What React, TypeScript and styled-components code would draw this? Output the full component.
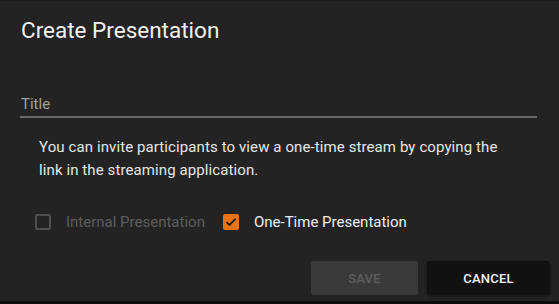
import styled, { createGlobalStyle } from "styled-components";

const GlobalStyle = createGlobalStyle`
  html, body {
    margin: 0;
    padding: 0;
    background: #0c0c0c;
  }
  body {
    font-family: Roboto, "Liberation Sans", sans-serif;
    -webkit-font-smoothing: antialiased;
  }
`;

const Dialog = styled.div`
  width: 559px;
  height: 301px;
  box-sizing: border-box;
  background: #232323;
  border-top: 1px solid #1b1b1b;
  display: flex;
  flex-direction: column;
`;

const Heading = styled.h2`
  margin: 0;
  padding: 15px 21px 0;
  font-size: 22.5px;
  line-height: 28px;
  font-weight: 400;
  color: #f2f2f2;
`;

const Content = styled.div`
  padding: 50px 22px 0 20px;
  display: flex;
  flex-direction: column;
`;

const Field = styled.label`
  display: block;
  border-bottom: 2px solid #6a6a6a;
  padding: 0 1px 2px;
`;

const FieldLabel = styled.span`
  font-size: 15px;
  line-height: 20px;
  color: #a0a0a0;
`;

const Hint = styled.p`
  margin: 18px 19px 0 19px;
  font-size: 15px;
  letter-spacing: 0.1px;
  line-height: 23px;
  color: #e6e6e6;
`;

const Options = styled.div`
  display: flex;
  align-items: center;
  gap: 18px;
  margin: 30px 0 0 15px;
`;

const Option = styled.label<{ $disabled?: boolean }>`
  display: flex;
  align-items: center;
  gap: 15px;
  font-size: 15px;
  line-height: 20px;
  color: ${(p) => (p.$disabled ? "#5d5d5d" : "#efefef")};
`;

const Box = styled.span<{ $checked?: boolean }>`
  width: 16px;
  height: 16px;
  box-sizing: border-box;
  border-radius: 2px;
  display: flex;
  align-items: center;
  justify-content: center;
  background: ${(p) => (p.$checked ? "#e8740f" : "transparent")};
  border: ${(p) => (p.$checked ? "none" : "2px solid #4f4f4f")};
`;

const Actions = styled.div`
  margin-top: auto;
  display: flex;
  justify-content: flex-end;
  gap: 9px;
  padding: 0 9px 6px 0;
`;

const Button = styled.button<{ $primary?: boolean }>`
  height: 34px;
  width: ${(p) => (p.$primary ? "123px" : "107px")};
  border: none;
  border-radius: 3px;
  font-family: inherit;
  font-size: 13px;
  font-weight: 500;
  letter-spacing: 0.2px;
  text-transform: uppercase;
  background: ${(p) => (p.$primary ? "#111111" : "#3a3a3a")};
  color: ${(p) => (p.$primary ? "#f5f5f5" : "#5e5e5e")};
  box-shadow: ${(p) => (p.$primary ? "0 1px 3px rgba(0,0,0,0.5)" : "none")};
`;

const Check = () => (
  <svg width="12" height="10" viewBox="0 0 12 10">
    <path d="M1.5 5.2 L4.5 8 L10.5 1.8" fill="none" stroke="#2a1a0a" strokeWidth="1.8" />
  </svg>
);

export default function App() {
  return (
    <>
      <GlobalStyle />
      <Dialog>
        <Heading>Create Presentation</Heading>
        <Content>
          <Field>
            <FieldLabel>Title</FieldLabel>
          </Field>
          <Hint>
            You can invite participants to view a one-time stream by copying the link in the
            streaming application.
          </Hint>
          <Options>
            <Option $disabled>
              <Box />
              Internal Presentation
            </Option>
            <Option>
              <Box $checked>
                <Check />
              </Box>
              One-Time Presentation
            </Option>
          </Options>
        </Content>
        <Actions>
          <Button disabled>Save</Button>
          <Button $primary>Cancel</Button>
        </Actions>
      </Dialog>
    </>
  );
}
